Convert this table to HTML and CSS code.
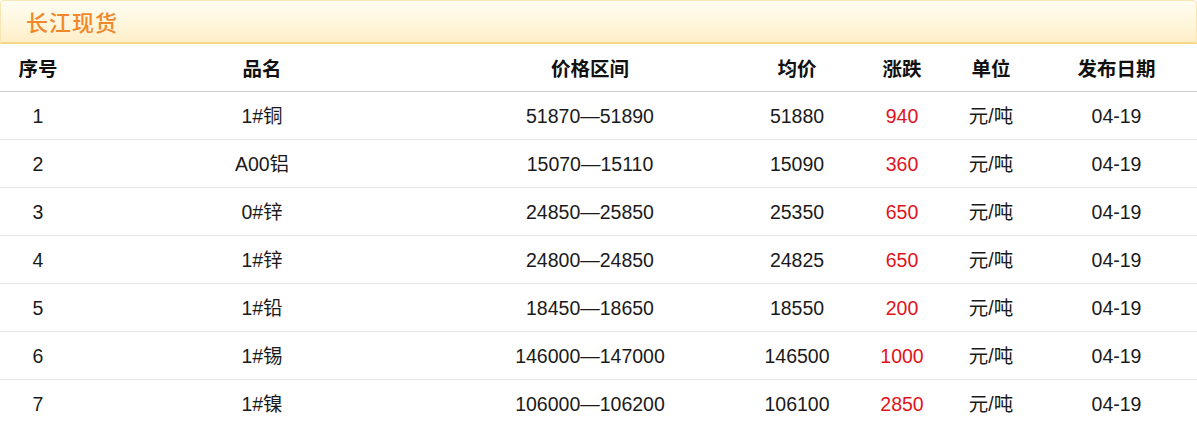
FILE: index.html
```html
<!DOCTYPE html>
<html lang="zh-CN">
<head>
<meta charset="utf-8">
<title>长江现货</title>
<link rel="stylesheet" href="styles.css">
</head>
<body>
<div class="panel">
  <div class="title-bar"><span class="title">长江现货</span></div>
  <div class="table">
    <div class="row head">
      <div>序号</div><div>品名</div><div>价格区间</div><div>均价</div><div>涨跌</div><div>单位</div><div>发布日期</div>
    </div>
    <div class="row"><div>1</div><div>1#铜</div><div>51870—51890</div><div>51880</div><div class="up">940</div><div>元/吨</div><div>04-19</div></div>
    <div class="row"><div>2</div><div>A00铝</div><div>15070—15110</div><div>15090</div><div class="up">360</div><div>元/吨</div><div>04-19</div></div>
    <div class="row"><div>3</div><div>0#锌</div><div>24850—25850</div><div>25350</div><div class="up">650</div><div>元/吨</div><div>04-19</div></div>
    <div class="row"><div>4</div><div>1#锌</div><div>24800—24850</div><div>24825</div><div class="up">650</div><div>元/吨</div><div>04-19</div></div>
    <div class="row"><div>5</div><div>1#铅</div><div>18450—18650</div><div>18550</div><div class="up">200</div><div>元/吨</div><div>04-19</div></div>
    <div class="row"><div>6</div><div>1#锡</div><div>146000—147000</div><div>146500</div><div class="up">1000</div><div>元/吨</div><div>04-19</div></div>
    <div class="row"><div>7</div><div>1#镍</div><div>106000—106200</div><div>106100</div><div class="up">2850</div><div>元/吨</div><div>04-19</div></div>
  </div>
</div>
</body>
</html>
```
FILE: styles.css
```css
html, body {
  margin: 0;
  padding: 0;
  background: #fff;
}
body {
  font-family: "Liberation Sans", Arial, "Noto Sans CJK SC", sans-serif;
  color: #1a1a1a;
}
.panel {
  width: 1197px;
}
.title-bar {
  box-sizing: border-box;
  height: 44px;
  border: 1px solid #f9e6b4;
  border-bottom: 2px solid #f6d889;
  border-radius: 4px 4px 0 0;
  background: linear-gradient(to bottom, #fffdf2 0%, #fff6dc 55%, #ffefc8 100%);
  display: flex;
  align-items: center;
  padding-left: 25px;
}
.title {
  font-family: "Noto Sans CJK SC", sans-serif;
  font-size: 22px;
  font-weight: 500;
  color: #f0882a;
  letter-spacing: 1px;
  line-height: 1;
  margin-top: -1px;
}
.table {
  display: flex;
  flex-direction: column;
}
.row {
  display: grid;
  grid-template-columns: 76px 372px 284px 130px 80px 98px 157px;
  height: 48px;
  box-sizing: border-box;
  border-bottom: 1px solid #e6e6e6;
  align-items: center;
  font-size: 19.5px;
}
.row > div {
  text-align: center;
  line-height: 1;
  padding-top: 2px;
}
.row.head {
  height: 48px;
  border-bottom: 1px solid #cfcfcf;
  font-family: "Noto Sans CJK SC", sans-serif;
  font-weight: 700;
  font-size: 19.5px;
  color: #111;
}
.row.head > div {
  padding-top: 0;
}
.row:last-child {
  border-bottom: none;
}
.row > div:last-child {
  padding-right: 4px;
}
.up {
  color: #e2131b;
}
```
